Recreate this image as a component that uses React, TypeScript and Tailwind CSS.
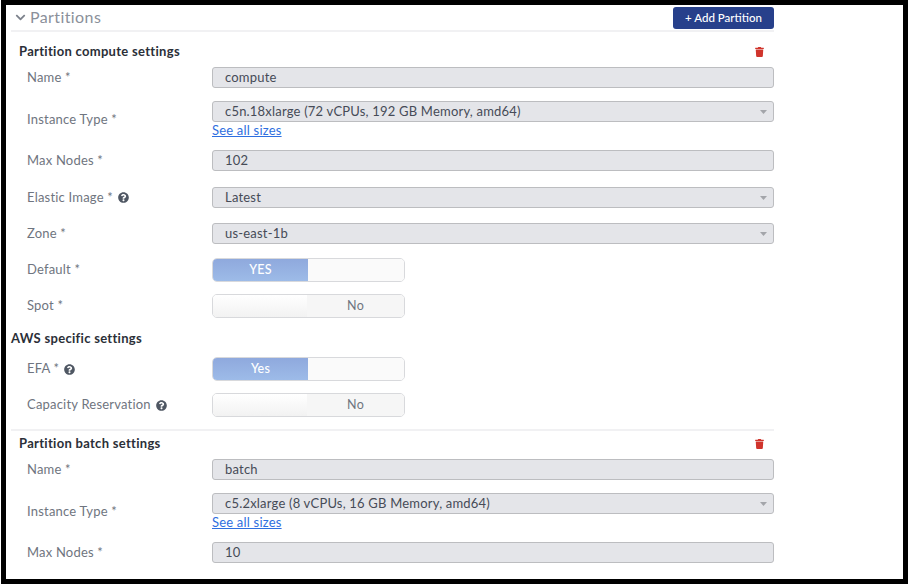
import type { ReactNode } from "react"
import { FaChevronDown, FaQuestionCircle, FaTrash } from "react-icons/fa"

function Label({ text, help }: { text: string; help?: boolean }) {
  return (
    <div className="w-[201px] shrink-0 pl-[16px] flex items-center gap-[5px] text-[13px] tracking-[0.2px] text-[#6f7580]">
      <span>{text}</span>
      {help && <FaQuestionCircle className="w-[11px] h-[11px] text-[#4f5763]" />}
    </div>
  )
}

function Field({ value, select }: { value: string; select?: boolean }) {
  return (
    <div className="flex-1 h-[21px] flex items-center justify-between pl-[12px] pr-[6px] rounded-[3px] bg-[#e4e5e9] border border-[#bcbdc0] text-[13px] tracking-[0.2px] text-[#464b57]">
      <span>{value}</span>
      {select && (
        <svg width="7" height="4" viewBox="0 0 7 4">
          <path d="M0 0h7L3.5 4z" fill="#a3a5aa" />
        </svg>
      )}
    </div>
  )
}

function Row({ label, help, mt, children }: { label: string; help?: boolean; mt: string; children: ReactNode }) {
  return (
    <div className={`flex items-center ${mt}`}>
      <Label text={label} help={help} />
      {children}
    </div>
  )
}

function Toggle({ text, on }: { text: string; on?: boolean }) {
  return (
    <div className="w-[193px] h-[24px] flex rounded-[5px] border border-[#d8d9dc] overflow-hidden text-[12.5px] tracking-[0.2px]">
      {on ? (
        <>
          <div className="w-[95px] flex items-center justify-center font-medium text-white bg-gradient-to-b from-[#8fa9dd] to-[#9dbbe8]">{text}</div>
          <div className="flex-1 bg-[#fafafa]" />
        </>
      ) : (
        <>
          <div className="w-[94px] bg-gradient-to-b from-[#ffffff] to-[#f2f2f2]" />
          <div className="flex-1 flex items-center justify-center bg-[#f6f6f6] text-[#6f7580]">{text}</div>
        </>
      )}
    </div>
  )
}

function SizesLink() {
  return (
    <a href="#" className="block mt-[1px] h-[14px] leading-[14px] text-[13px] tracking-[0.2px] text-[#2f6fe0] underline">
      See all sizes
    </a>
  )
}

function SectionTitle({ title, mt }: { title: string; mt: string }) {
  return (
    <div className={`flex items-center justify-between pl-[8px] pr-[10px] h-[14px] ${mt}`}>
      <h3 className="text-[13px] tracking-[0.3px] font-bold text-[#2b2f38]">{title}</h3>
      <FaTrash className="w-[9px] h-[10px] text-[#d0342c]" />
    </div>
  )
}

function InstanceRow({ value, mt }: { value: string; mt: string }) {
  return (
    <div className={`flex ${mt}`}>
      <div className="flex items-center h-[37px]">
        <Label text="Instance Type *" />
      </div>
      <div className="flex-1">
        <Field value={value} select />
        <SizesLink />
      </div>
    </div>
  )
}

export default function App() {
  return (
    <div className="w-[910px] h-[587px] bg-white pl-[1px] overflow-hidden" style={{ fontFamily: "Lato, sans-serif" }}>
      <div className="w-[907px] h-[584px] border-black border-t-[5px] border-b-[5px] border-l-[5px] border-r-[5px] bg-white overflow-hidden">
        <div className="w-[763px] ml-[5px]">
          <div className="flex items-end justify-between h-[27px] border-b-2 border-[#f1f1f3]">
            <div className="flex items-center gap-[4px] h-[26px] pl-[4px] text-[16px] tracking-[0.4px] text-[#8b909a]">
              <FaChevronDown className="w-[11px] h-[11px] text-[#7d828c]" />
              <span>Partitions</span>
            </div>
            <button className="w-[101px] h-[22px] mb-[1px] rounded-[3px] bg-[#27408b] text-white text-[11.5px] font-medium">
              + Add Partition
            </button>
          </div>

          <SectionTitle title="Partition compute settings" mt="mt-[13px]" />
          <Row label="Name *" mt="mt-[8px]"><Field value="compute" /></Row>
          <InstanceRow value="c5n.18xlarge (72 vCPUs, 192 GB Memory, amd64)" mt="mt-[13px]" />
          <Row label="Max Nodes *" mt="mt-[12px]"><Field value="102" /></Row>
          <Row label="Elastic Image *" help mt="mt-[16px]"><Field value="Latest" select /></Row>
          <Row label="Zone *" mt="mt-[15px]"><Field value="us-east-1b" select /></Row>
          <Row label="Default *" mt="mt-[14px]"><Toggle text="YES" on /></Row>
          <Row label="Spot *" mt="mt-[12px]"><Toggle text="No" /></Row>
          <h3 className="mt-[13px] h-[14px] leading-[14px] text-[13px] tracking-[0.3px] font-bold text-[#2b2f38]">AWS specific settings</h3>
          <Row label="EFA *" help mt="mt-[12px]"><Toggle text="Yes" on /></Row>
          <Row label="Capacity Reservation" help mt="mt-[12px]"><Toggle text="No" /></Row>
          <div className="mt-[12px] border-t-2 border-[#f1f1f3]" />

          <SectionTitle title="Partition batch settings" mt="mt-[6px]" />
          <Row label="Name *" mt="mt-[8px]"><Field value="batch" /></Row>
          <InstanceRow value="c5.2xlarge (8 vCPUs, 16 GB Memory, amd64)" mt="mt-[13px]" />
          <Row label="Max Nodes *" mt="mt-[12px]"><Field value="10" /></Row>
        </div>
      </div>
    </div>
  )
}
